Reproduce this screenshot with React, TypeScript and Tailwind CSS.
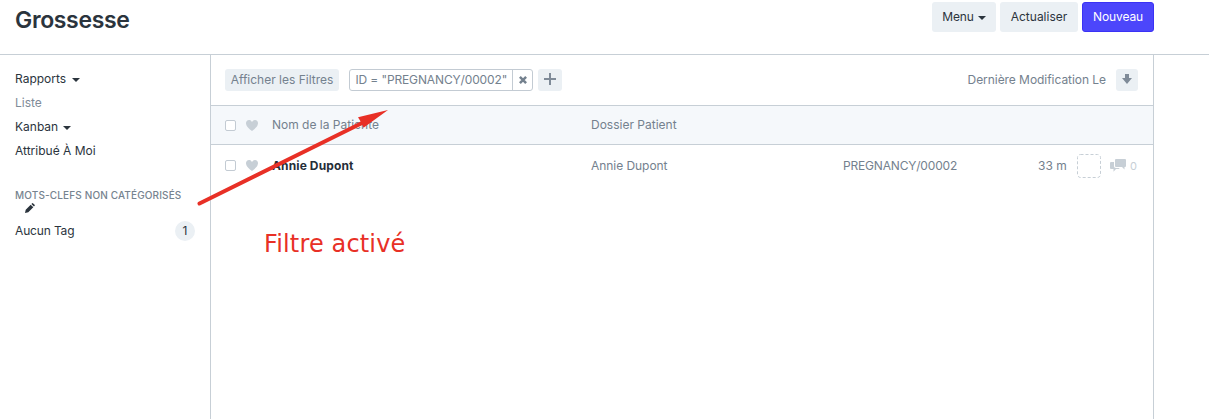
import React from "react";

const Caret = ({ className = "" }: { className?: string }) => (
  <span className={`inline-block border-x-4 border-t-4 border-x-transparent border-t-[#2b343d] ${className}`} />
);

const Heart = () => (
  <svg viewBox="0 0 12 11" className="ml-[10px] h-[11px] w-3 shrink-0" fill="#c7cfd6">
    <path d="M11.2 1C10.68.37 9.95.05 9 0 8.03 0 7.31.42 6.8 1c-.51.58-.78.92-.8 1-.02-.08-.28-.42-.8-1C4.68.42 4.03 0 3 0 2.05.05 1.31.38.8 1 .28 1.61.02 2.28 0 3c0 .52.09 1.52.67 2.67C1.25 6.82 3.01 8.61 6 11c2.98-2.39 4.77-4.17 5.34-5.33C11.91 4.51 12 3.5 12 3c-.02-.72-.28-1.39-.8-2z" />
  </svg>
);

const Check = () => (
  <span className="h-[11px] w-[11px] shrink-0 rounded-[2px] border border-[#c3cbd3] bg-white" />
);

export default function App() {
  return (
    <div className="relative flex h-[419px] w-[1209px] flex-col overflow-hidden bg-white font-['Inter','Liberation_Sans',sans-serif] text-[12px] leading-[18px] text-[#2b343d]">
      <header className="flex h-[55px] shrink-0 items-start justify-between border-b border-[#c7cfd6] pl-[15px]">
        <h1 className="mt-[5px] text-[23px] leading-[30px] font-semibold tracking-[-0.35px] text-[#2b343d]">Grossesse</h1>
        <div className="mt-[2px] mr-[55px] flex gap-1">
          <button className="flex h-[30px] w-16 items-center justify-center gap-1 rounded-[3px] bg-[#ebf0f4] tracking-[-0.15px]">
            Menu
            <Caret className="mt-px" />
          </button>
          <button className="h-[30px] w-[78px] rounded-[3px] bg-[#ebf0f4]">Actualiser</button>
          <button className="h-[30px] w-[72px] rounded-[3px] border border-[#3b32f5] bg-[#4c46fb] tracking-[-0.1px] text-white">Nouveau</button>
        </div>
      </header>

      <div className="flex flex-1">
        <aside className="w-[210px] shrink-0 pt-[15px] pl-[15px]">
          <div className="flex h-6 items-start">Rapports<Caret className="mt-[8px] ml-[6px]" /></div>
          <div className="h-6 text-[#7f8b98]">Liste</div>
          <div className="flex h-6 items-start">Kanban<Caret className="mt-[8px] ml-[5px]" /></div>
          <div className="h-6">Attribué À Moi</div>
          <div className="mt-[23px] h-[13px] text-[10px] leading-[13px] font-medium tracking-[0.14px] whitespace-nowrap text-[#76838f]">
            MOTS-CLEFS NON CATÉGORISÉS
          </div>
          <svg viewBox="0 0 10 10" className="mt-px ml-[10px] h-[10px] w-[10px]" fill="#2b343d">
            <path d="M0 10l.7-3.3L5.7 1.7 8.3 4.3 3.3 9.3zM6.4 1L7.2.3Q7.7-.1 8.2.4l1.4 1.4q.5.5 0 1l-.7.8z" />
          </svg>
          <div className="mt-[8px] flex h-5 w-[180px] items-center justify-between">
            <span className="tracking-[-0.15px]">Aucun Tag</span>
            <span className="flex h-5 w-5 items-center justify-center rounded-full bg-[#ebf0f4]">1</span>
          </div>
        </aside>

        <main className="flex w-[944px] shrink-0 flex-col border-x border-[#c7cfd6] text-[#74818e]">
          <div className="flex h-[51px] shrink-0 items-start border-b border-[#c7cfd6] pt-[14px] pr-[15px] pl-[14px]">
            <button className="h-[22px] w-[114px] rounded-[3px] bg-[#ebf0f4] whitespace-nowrap">Afficher les Filtres</button>
            <div className="ml-[10px] flex h-[22px] w-[184px] rounded-[3px] border border-[#c3cbd3]">
              <span className="flex w-[163px] items-center border-r border-[#c3cbd3] pl-[5.5px] tracking-[-0.13px] whitespace-nowrap">
                ID = "PREGNANCY/00002"
              </span>
              <span className="flex flex-1 items-center justify-center">
                <svg viewBox="0 0 8 8" className="h-2 w-2" stroke="#74818e" strokeWidth="2.5">
                  <path d="M.9.9l6.2 6.2M7.1.9L.9 7.1" />
                </svg>
              </span>
            </div>
            <button className="ml-[5px] flex h-[22px] w-6 items-center justify-center rounded-[3px] bg-[#ebf0f4]">
              <svg viewBox="0 0 12 12" className="mb-[2px] h-3 w-3" fill="#7f8b98">
                <path d="M12 7H7v5H5V7H0V5h5V0h2v5h5z" />
              </svg>
            </button>
            <span className="mt-[2px] mr-[10px] ml-auto tracking-[-0.05px]">Dernière Modification Le</span>
            <button className="flex h-[22px] w-[22px] items-center justify-center rounded-[3px] bg-[#ebf0f4]">
              <svg viewBox="0 0 10 10" className="mb-[2px] h-[10px] w-[10px]" fill="#7f8b98">
                <path d="M7 4V0H3v4H0l5 6 5-6z" />
              </svg>
            </button>
          </div>

          <div className="flex h-[39px] shrink-0 items-center border-b border-[#c7cfd6] bg-[#f5f8fb] pl-[14px]">
            <Check />
            <Heart />
            <span className="ml-[14px] w-[319px]">Nom de la Patiente</span>
            <span>Dossier Patient</span>
          </div>

          <div className="flex h-[41px] shrink-0 items-center pl-[14px]">
            <Check />
            <Heart />
            <span className="ml-[14px] w-[319px] font-bold tracking-[0.12px] text-[#252e38]">Annie Dupont</span>
            <span className="w-[252px] tracking-[-0.05px]">Annie Dupont</span>
            <span className="w-[195px] tracking-[-0.18px]">PREGNANCY/00002</span>
            <span className="w-[39px] whitespace-nowrap">33 m</span>
            <svg viewBox="0 0 24 24" className="h-6 w-6 shrink-0" fill="none" stroke="#c7cfd6">
              <rect x=".5" y=".5" width="23" height="23" rx="3" strokeDasharray="3 2" />
            </svg>
            <svg viewBox="0 0 16 13" className="ml-[9px] h-[13px] w-4 shrink-0" fill="#c7cfd6">
              <path d="M6 0h9q1 0 1 1v6q0 1-1 1h-.5v2.5L12 8H6Q5 8 5 7V1q0-1 1-1zM1 3h3v4.2q0 1.8 2 1.8h3.5q0 1-1 1H6l-2.5 2.8V10H1q-1 0-1-1V4q0-1 1-1z" />
            </svg>
            <span className="ml-[4px] text-[11px] tracking-[-0.5px] text-[#c7cfd6]">0</span>
          </div>
        </main>
      </div>

      <svg viewBox="0 0 1209 419" className="pointer-events-none absolute inset-0 h-full w-full">
        <path d="M199.5 203.5L366 121" stroke="#e83026" strokeWidth="4" strokeLinecap="round" />
        <path d="M388 110L358 117.3L361.5 123L363.5 127.8z" fill="#e83026" />
      </svg>
      <div className="absolute top-[229px] left-[264px] font-['DejaVu_Sans',sans-serif] text-[24px] leading-[30px] tracking-[0.15px] whitespace-nowrap text-[#e83026]">
        Filtre activé
      </div>
    </div>
  );
}
